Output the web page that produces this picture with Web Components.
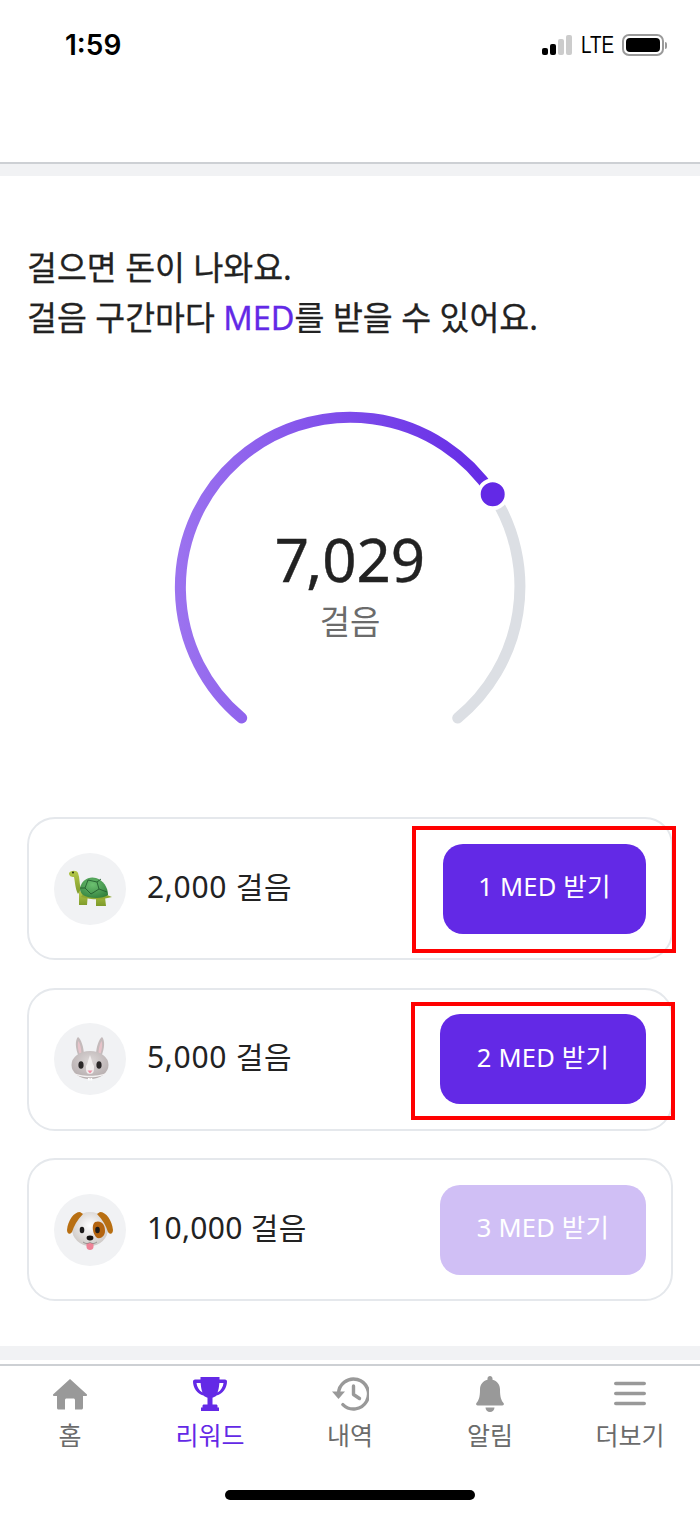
<!DOCTYPE html>
<html lang="ko">
<head>
<meta charset="utf-8">
<title>리워드</title>
<style>
  html, body { margin: 0; padding: 0; background: #fff; }
  body { width: 700px; height: 1514px; overflow: hidden; font-family: "Noto Sans", "Noto Sans CJK KR", sans-serif; color: #222; }
</style>
</head>
<body>
<rewards-app>
  <status-bar></status-bar>
  <intro-text>걸으면 돈이 나와요.<br>걸음 구간마다 <b>MED</b>를 받을 수 있어요.</intro-text>
  <step-gauge steps="7,029" label="걸음"></step-gauge>
  <reward-list>
    <reward-card label="2,000 걸음" action="1 MED 받기" btn-width="203" mark="top:7px;left:383px;width:264px;height:127px">
      <svg slot="emoji" width="46" height="40" viewBox="0 0 46 40">
        <defs>
          <radialGradient id="shell" cx=".45" cy=".35" r=".75"><stop offset="0" stop-color="#6cc070"/><stop offset="1" stop-color="#2f7d3b"/></radialGradient>
          <linearGradient id="skin" x1="0" y1="0" x2="0" y2="1"><stop offset="0" stop-color="#b6c94a"/><stop offset="1" stop-color="#7d9a2a"/></linearGradient>
        </defs>
        <path d="M12 36h8l1-12-9-2zM29 37h10l-1-9-9 1z" fill="url(#skin)"/>
        <path d="M2 4c2-3 8-3 9 0 2 5 1 10 3 16l-3 5C8 19 8 12 7 8 4 8 2 7 2 4z" fill="url(#skin)"/>
        <path d="M14 28c14 4 24 2 31 0l-5-2-24-1z" fill="#8fa832"/>
        <path d="M13 20C14 11 22 7 29 9c7 2 12 9 12 17-5 4-19 4-25 0-2-2-3-4-3-6z" fill="url(#shell)"/>
        <path d="M21 11l-3 8 6 6M21 11l9 2 2 7-8 5M32 20l8 3M30 13l4-3M18 19l-5 0" stroke="#245f2f" stroke-width=".9" fill="none"/>
        <circle cx="6" cy="3.600" r="1" fill="#1f2a10"/>
      </svg>
    </reward-card>
    <reward-card label="5,000 걸음" action="2 MED 받기" btn-width="206" mark="top:12px;left:382px;width:264px;height:118px">
      <svg slot="emoji" width="40" height="46" viewBox="0 0 40 46">
        <defs>
          <radialGradient id="fur" cx=".5" cy=".35" r=".7"><stop offset="0" stop-color="#dcd7d7"/><stop offset="1" stop-color="#b3aaab"/></radialGradient>
        </defs>
        <path d="M9 21C5 12 5 4 8 1c3 2 6 10 6 19zM31 21c4-9 4-17 1-20-3 2-6 10-6 19z" fill="#c4babb"/>
        <path d="M9.500 18C7.500 12 7.500 7 8.500 5c1.500 2 3 8 3 13zM30.500 18c2-6 2-11 1-13-1.500 2-3 8-3 13z" fill="#e6c3c9"/>
        <ellipse cx="20" cy="29" rx="18.500" ry="14" fill="url(#fur)"/>
        <path d="M20 19c-2 5-2 8-4 11 0 5 0 8 4 8s4-3 4-8c-2-3-2-6-4-11z" fill="#f2eeee"/>
        <path d="M3 36c5 5 29 5 34 0-3 7-31 7-34 0z" fill="#f4f1f1"/>
        <ellipse cx="11" cy="29" rx="2.600" ry="3.800" fill="#2b2728"/>
        <ellipse cx="29" cy="29" rx="2.600" ry="3.800" fill="#2b2728"/>
        <path d="M17.500 34.500h5L20 37.500z" fill="#ee8fa4"/>
        <path d="M18 42h1.800v2.500H18zM20.400 42h1.800v2.500h-1.800z" fill="#fff"/>
      </svg>
    </reward-card>
    <reward-card label="10,000 걸음" action="3 MED 받기" btn-width="206" disabled>
      <svg slot="emoji" width="46" height="40" viewBox="0 0 46 40">
        <defs>
          <radialGradient id="face" cx=".5" cy=".4" r=".65"><stop offset="0" stop-color="#fff"/><stop offset="1" stop-color="#c9c4c1"/></radialGradient>
        </defs>
        <ellipse cx="23" cy="19" rx="18" ry="17" fill="url(#face)"/>
        <path d="M13 2C7 2 1 10 0 20c0 4 3 5 5 2 2-6 5-12 11-18z" fill="#b86f12"/>
        <path d="M33 2c6 0 12 8 13 18 0 4-3 5-5 2-2-6-5-12-11-18z" fill="#b86f12"/>
        <path d="M28 12c6-2 10 2 10 9 0 6-6 9-9 6-3-3-5-12-1-15z" fill="#b4640f"/>
        <ellipse cx="15" cy="20" rx="2.300" ry="3.300" fill="#1d1b1a"/>
        <ellipse cx="30.500" cy="20" rx="2.300" ry="3.300" fill="#1d1b1a"/>
        <path d="M19.500 33h7v4c0 4-7 4-7 0z" fill="#ee8296"/>
        <ellipse cx="23" cy="28" rx="3.400" ry="2.400" fill="#151312"/>
        <path d="M16 32c3 2 5 2 7 0 2 2 4 2 7 0" stroke="#8a8583" stroke-width=".8" fill="none"/>
      </svg>
    </reward-card>
  </reward-list>
  <tab-bar>
    <tab-item label="홈">
      <svg slot="icon" width="34" height="32" viewBox="0 0 34 32"><path d="M17 1 34 16.500c.4.600 0 1.500-.8 1.500H30v12c0 .800-.7 1.500-1.500 1.500H22V22c0-.800-.7-1.500-1.500-1.500h-7c-.8 0-1.500.7-1.500 1.500v9.500H5.500C4.700 31.500 4 30.800 4 30V18H.8c-.8 0-1.200-.9-.8-1.500z" fill="#999"/></svg>
    </tab-item>
    <tab-item label="리워드" active>
      <svg slot="icon" width="34" height="34" viewBox="0 0 34 34"><path fill-rule="evenodd" d="M7.500 0h19v2.500H32c1 0 2 .8 2 2 0 6-4 12.500-10.500 14-1 1-2.500 1.800-4 2.300v6.700H23c1 0 1.500.5 1.500 1.500v1.500H26V34H8v-3.500h1.500V29c0-1 .5-1.500 1.500-1.500h3.500v-6.700c-1.500-.5-3-1.300-4-2.300C4 17 0 10.500 0 4.500c0-1.200 1-2 2-2h5.500zM3.500 6c.3 3.500 2.500 7.500 6 9.500C8.500 13 7.900 9.500 7.600 6zm27 0h-4.100c-.3 3.500-.9 7-1.900 9.500 3.500-2 5.700-6 6-9.500z" fill="#6329e6"/></svg>
    </tab-item>
    <tab-item label="내역">
      <svg slot="icon" width="37" height="34" viewBox="0 0 37 34"><path d="M6.500 17a15 15 0 1 1 4.400 10.600" fill="none" stroke="#999" stroke-width="3.400" stroke-linecap="round"/><path d="M0 14.500h13L6.500 22z" fill="#999"/><path d="M21.500 9v8.500l6 4" fill="none" stroke="#999" stroke-width="3.400" stroke-linecap="round" stroke-linejoin="round"/></svg>
    </tab-item>
    <tab-item label="알림">
      <svg slot="icon" width="28" height="36" viewBox="0 0 28 36"><path d="M14 0c1.400 0 2.500 1.100 2.500 2.500v1.300C21 4.900 24 8.800 24 13.500c0 7.500 1.300 11 3.500 13.500.7.800.5 2.500-1.200 2.500H1.700C0 29.500-.2 27.800.5 27 2.700 24.500 4 21 4 13.500 4 8.800 7 4.900 11.500 3.800V2.500C11.500 1.100 12.600 0 14 0zM9.500 31.500h9c0 2.500-2 4.500-4.500 4.500s-4.500-2-4.500-4.500z" fill="#999"/></svg>
    </tab-item>
    <tab-item label="더보기">
      <svg slot="icon" width="32" height="34" viewBox="0 0 32 34"><path d="M1.800 6.500h28.400M1.800 16.500h28.400M1.800 26.500h28.400" stroke="#999" stroke-width="3.600" stroke-linecap="round"/></svg>
    </tab-item>
  </tab-bar>
</rewards-app>

<script>
class RewardsApp extends HTMLElement {
  connectedCallback() {
    this.attachShadow({ mode: 'open' });
    this.shadowRoot.innerHTML = `
      <style>
        :host { display: flex; flex-direction: column; width: 700px; height: 1514px; background: #fff; }
      </style>
      <slot></slot>
    `;
  }
}

class StatusBar extends HTMLElement {
  connectedCallback() {
    this.attachShadow({ mode: 'open' });
    this.shadowRoot.innerHTML = `
      <style>
        :host { display: block; height: 164px; box-sizing: border-box; border-bottom: 2px solid #cdd0d4; }
        .bar { display: flex; align-items: center; justify-content: space-between; padding: 30px 33px 0 65px; height: 30px; }
        .time { font: 600 28px/30px Inter, sans-serif; color: #000; letter-spacing: 0; }
        .right { display: flex; align-items: center; }
        .signal { display: flex; align-items: flex-end; gap: 2px; height: 20px; margin-right: 9px; }
        .signal i { display: block; width: 6px; border-radius: 2px; background: #ccc; }
        .signal i:nth-child(1) { height: 7px; background: #000; }
        .signal i:nth-child(2) { height: 11px; background: #000; }
        .signal i:nth-child(3) { height: 16px; }
        .signal i:nth-child(4) { height: 20px; }
        .lte { font: 400 23px/24px "Liberation Sans", sans-serif; color: #000; width: 33px; transform: scaleX(.82); transform-origin: left center; margin-right: 8px; white-space: nowrap; }
        .batt { display: flex; box-sizing: border-box; width: 42px; height: 22px; padding: 2px; border: 2px solid #9a9a9a; border-radius: 7px; }
        .batt i { flex: 1; background: #000; border-radius: 4px; }
        .tip { width: 2px; height: 7px; margin-left: 1px; background: #9a9a9a; border-radius: 0 2px 2px 0; }
      </style>
      <div class="bar">
        <span class="time">1:59</span>
        <span class="right">
          <span class="signal"><i></i><i></i><i></i><i></i></span>
          <span class="lte">LTE</span>
          <span class="batt"><i></i></span><span class="tip"></span>
        </span>
      </div>
    `;
  }
}

class IntroText extends HTMLElement {
  connectedCallback() {
    this.attachShadow({ mode: 'open' });
    this.shadowRoot.innerHTML = `
      <style>
        :host { display: block; border-top: 12px solid #f1f2f4; padding: 67px 27px 0; font-size: 32.5px; font-weight: 400; -webkit-text-stroke: .3px currentColor; line-height: 50px; color: #222; height: 98px; }
        ::slotted(b) { font-weight: 400; color: #6329e6; }
      </style>
      <slot></slot>
    `;
  }
}

class StepGauge extends HTMLElement {
  connectedCallback() {
    const steps = this.getAttribute('steps');
    this.attachShadow({ mode: 'open' });
    this.shadowRoot.innerHTML = `
      <style>
        :host { display: grid; justify-content: center; margin-top: 59px; height: 340px; margin-bottom: 77px; }
        svg, .center { grid-area: 1 / 1; }
        svg { display: block; }
        .center { display: flex; flex-direction: column; align-items: center; padding-top: 123px; }
        .num { font-size: 60px; line-height: 72px; -webkit-text-stroke: .4px currentColor; color: #222; }
        .num span { letter-spacing: -3px; }
        .lbl { font-size: 33px; line-height: 40px; margin-top: 7px; color: #6b6b6b; }
      </style>
      <svg width="380" height="340" viewBox="0 0 380 340">
        <defs>
          <linearGradient id="arc" gradientUnits="userSpaceOnUse" x1="20" y1="0" x2="335" y2="0">
            <stop offset="0" stop-color="#9b72ef"/>
            <stop offset="1" stop-color="#6329e6"/>
          </linearGradient>
        </defs>
        <path d="M332.700 94.300A170 170 0 0 1 297.700 318" fill="none" stroke="#dcdfe4" stroke-width="11" stroke-linecap="round"/>
        <path d="M81.700 318A170 170 0 1 1 332.700 94.300" fill="none" stroke="url(#arc)" stroke-width="11" stroke-linecap="round"/>
        <circle cx="332.700" cy="94.300" r="14" fill="#6329e6" stroke="#fff" stroke-width="4"/>
      </svg>
      <div class="center">
        <span class="num"><span>${steps[0]}</span>${steps.slice(1)}</span>
        <span class="lbl">${this.getAttribute('label')}</span>
      </div>
    `;
  }
}

class RewardList extends HTMLElement {
  connectedCallback() {
    this.attachShadow({ mode: 'open' });
    this.shadowRoot.innerHTML = `
      <style>
        :host { display: flex; flex-direction: column; gap: 27.5px; padding: 0 27px; height: 484px; }
      </style>
      <slot></slot>
    `;
  }
}

class RewardCard extends HTMLElement {
  connectedCallback() {
    const disabled = this.hasAttribute('disabled');
    const mark = this.getAttribute('mark');
    this.attachShadow({ mode: 'open' });
    this.shadowRoot.innerHTML = `
      <style>
        :host { display: flex; position: relative; align-items: center; box-sizing: border-box; height: 143px; padding: 0 25px; background: #fff; border: 2px solid #e5e8ec; border-radius: 28px; }
        .emoji { display: flex; align-items: center; justify-content: center; flex: none; width: 72px; height: 72px; border-radius: 50%; background: #f1f2f4; }
        .label { flex: 1; margin-left: 21px; padding-bottom: 4px; font-size: 30px; line-height: 40px; letter-spacing: .7px; color: #222; }
        :host([disabled]) .label { letter-spacing: .3px; }
        .btn { display: flex; align-items: center; justify-content: center; flex: none; box-sizing: border-box; height: 90px; padding-bottom: 8px; border-radius: 20px; font-size: 25.5px; letter-spacing: .2px; color: #fff; background: ${disabled ? '#d0bff5' : '#6329e6'}; width: ${this.getAttribute('btn-width')}px; }
        .mark { position: absolute; box-sizing: border-box; border: 4px solid #ff0000; }
      </style>
      <span class="emoji"><slot name="emoji"></slot></span>
      <span class="label">${this.getAttribute('label')}</span>
      <span class="btn">${this.getAttribute('action')}</span>
      ${mark ? `<span class="mark" style="${mark}"></span>` : ''}
    `;
  }
}

class TabBar extends HTMLElement {
  connectedCallback() {
    this.attachShadow({ mode: 'open' });
    this.shadowRoot.innerHTML = `
      <style>
        :host { display: block; margin-top: 45px; border-top: 14px solid #f1f2f4; }
        .tabs { display: grid; grid-template-columns: repeat(5, 140px); margin-top: 4px; border-top: 2px solid #cdd0d4; height: 124px; }
        .home { width: 250px; height: 10px; margin: 0 auto; border-radius: 5px; background: #000; }
      </style>
      <div class="tabs"><slot></slot></div>
      <div class="home"></div>
    `;
  }
}

class TabItem extends HTMLElement {
  connectedCallback() {
    const active = this.hasAttribute('active');
    this.attachShadow({ mode: 'open' });
    this.shadowRoot.innerHTML = `
      <style>
        :host { display: flex; flex-direction: column; align-items: center; padding-top: 10px; }
        .icon { display: flex; align-items: center; justify-content: center; height: 36px; }
        .label { margin-top: 5px; font-size: 25px; line-height: 36px; color: ${active ? '#6329e6' : '#6b6b6b'}; }
      </style>
      <span class="icon"><slot name="icon"></slot></span>
      <span class="label">${this.getAttribute('label')}</span>
    `;
  }
}

customElements.define('rewards-app', RewardsApp);
customElements.define('status-bar', StatusBar);
customElements.define('intro-text', IntroText);
customElements.define('step-gauge', StepGauge);
customElements.define('reward-list', RewardList);
customElements.define('reward-card', RewardCard);
customElements.define('tab-bar', TabBar);
customElements.define('tab-item', TabItem);
</script>
</body>
</html>
